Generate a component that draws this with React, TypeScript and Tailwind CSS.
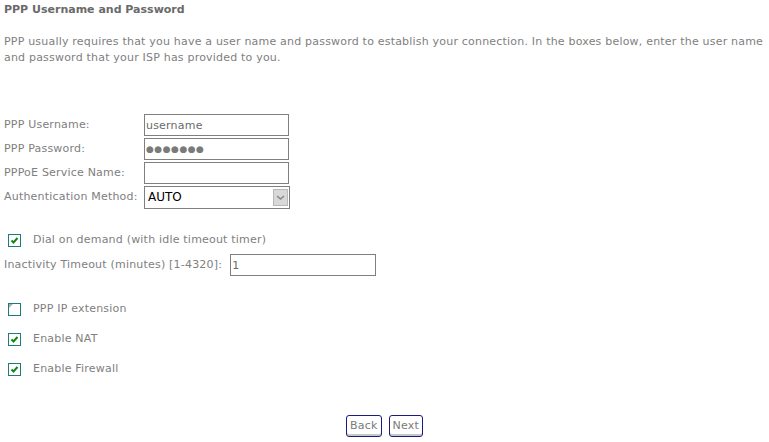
import React from 'react';

const Check = ({ checked }: { checked: boolean }) => (
  <span className="relative inline-block w-[13px] h-[13px] border border-[#1c7c7c] bg-white">
    {checked ? (
      <svg viewBox="0 0 11 11" className="absolute left-0 top-0 w-[11px] h-[11px]">
        <path d="M2.5 5.5 L4.5 7.5 L8.5 3" stroke="#138513" strokeWidth="2" fill="none" />
      </svg>
    ) : (
      <svg viewBox="0 0 11 11" className="absolute left-0 top-0 w-[11px] h-[11px]">
        <path d="M0 0 L4 0 L0 4 Z" fill="#b0b0b0" />
      </svg>
    )}
  </span>
);

const Field = ({ label, children }: { label: string; children: React.ReactNode }) => (
  <div className="flex items-center h-[24px]">
    <span className="w-[140px] shrink-0">{label}</span>
    {children}
  </div>
);

const inputCls = 'w-[145px] h-[22px] border border-[#7f7f7f] bg-white px-[1px] text-[11px] leading-[20px] text-[#6a6a6a] outline-none';

const CheckRow = ({ checked, label }: { checked: boolean; label: string }) => (
  <div className="flex items-center h-[30px]">
    <span className="pl-[4px] w-[29px] flex items-center"><Check checked={checked} /></span>
    <span>{label}</span>
  </div>
);

const Btn = ({ text }: { text: string }) => (
  <button className="h-[22px] px-[3px] border border-[#1a1a80] rounded-[3px] bg-white text-[#7a7a7a] text-[11px] shadow-[inset_0_-2px_0_#c8c8c8]">
    {text}
  </button>
);

export default function App() {
  return (
    <div
      className="w-[769px] h-[442px] bg-white text-[11px] text-[#808080] pl-[4px] pt-[1px] tracking-[0.2px]"
      style={{ fontFamily: 'Tahoma, "DejaVu Sans", sans-serif' }}
    >
      <div className="font-bold leading-[18px] text-[#6a6a6a] tracking-normal">PPP Username and Password</div>
      <p className="mt-[15px] leading-[16px] w-[765px]">
        PPP usually requires that you have a user name and password to establish your connection. In the boxes below, enter the user name and password that your ISP has provided to you.
      </p>

      <div className="mt-[47px] flex flex-col">
        <Field label="PPP Username:">
          <input className={inputCls} defaultValue="username" />
        </Field>
        <Field label="PPP Password:">
          <div className={inputCls + ' flex items-center'}>
            <span className="text-[9px] tracking-[0.5px] text-[#7a7a7a]">●●●●●●●</span>
          </div>
        </Field>
        <Field label="PPPoE Service Name:">
          <input className={inputCls} defaultValue="" />
        </Field>
        <Field label="Authentication Method:">
          <div className="w-[146px] h-[23px] border border-[#7f7f7f] bg-white flex items-center justify-between pl-[3px] pr-[1px]">
            <span className="text-black text-[12px] tracking-normal">AUTO</span>
            <span className="w-[15px] h-[17px] bg-[#d8d8d8] border border-[#b8b8b8] flex items-center justify-center">
              <svg viewBox="0 0 9 7" className="w-[9px] h-[7px]">
                <path d="M1 2 L4.5 5 L8 2" stroke="#888" strokeWidth="1.6" fill="none" />
              </svg>
            </span>
          </div>
        </Field>
      </div>

      <div className="mt-[16px]">
        <CheckRow checked label="Dial on demand (with idle timeout timer)" />
      </div>
      <div className="flex items-center h-[24px] mt-[-2px]">
        <span className="mr-[8px]">Inactivity Timeout (minutes) [1-4320]:</span>
        <input className={inputCls + ' w-[146px]'} defaultValue="1" />
      </div>

      <div className="mt-[17px]">
        <CheckRow checked={false} label="PPP IP extension" />
        <CheckRow checked label="Enable NAT" />
        <CheckRow checked label="Enable Firewall" />
      </div>

      <div className="mt-[31px] flex justify-center gap-[7px] pr-[4px]">
        <Btn text="Back" />
        <Btn text="Next" />
      </div>
    </div>
  );
}
